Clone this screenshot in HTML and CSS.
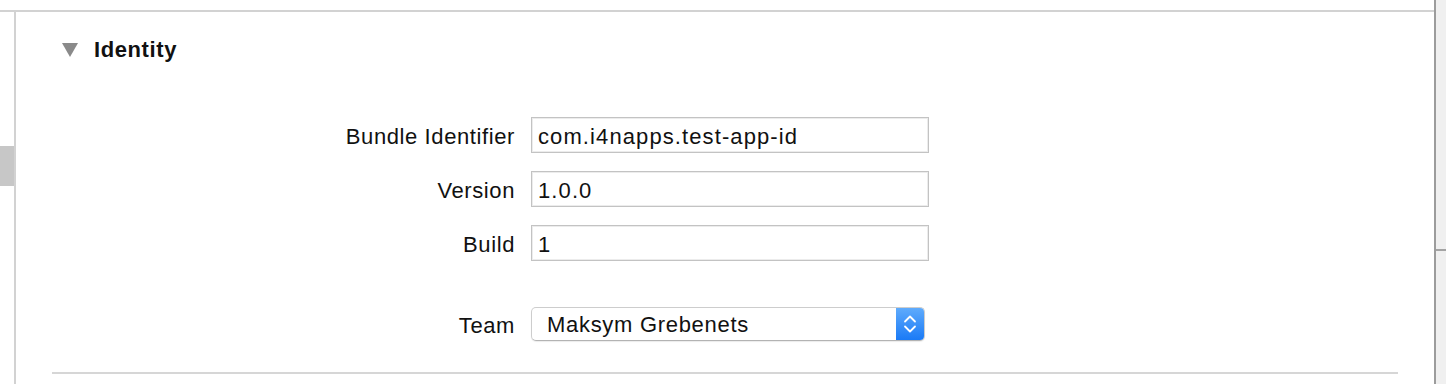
FILE: index.html
```html
<!DOCTYPE html>
<html lang="en">
<head>
  <meta charset="UTF-8">
  <title>Identity</title>
  <link rel="stylesheet" href="styles.css">
</head>
<body>

  <div class="editor">
    <div class="top-gap"></div>
    <div class="pane">
      <div class="gutter">
        <div class="gutter-mark"></div>
      </div>
      <div class="content">

        <div class="section-head">
          <span class="disclosure"></span>
          <h2>Identity</h2>
        </div>

        <div class="form-grid">
          <label>Bundle Identifier</label>
          <div class="field">com.i4napps.test-app-id</div>

          <label>Version</label>
          <div class="field">1.0.0</div>

          <label>Build</label>
          <div class="field">1</div>

          <label class="team-label">Team</label>
          <div class="popup team-popup">
            <span class="popup-value">Maksym Grebenets</span>
            <span class="popup-arrows">
              <svg width="14" height="22" viewBox="0 0 14 22">
                <path d="M2 8.5 L7 3.5 L12 8.5" fill="none" stroke="#fff" stroke-width="1.8" stroke-linecap="round" stroke-linejoin="round"/>
                <path d="M2 13.5 L7 18.5 L12 13.5" fill="none" stroke="#fff" stroke-width="1.8" stroke-linecap="round" stroke-linejoin="round"/>
              </svg>
            </span>
          </div>
        </div>

        <div class="separator"></div>
      </div>
    </div>
  </div>

  <div class="scroll-side">
    <div class="scroll-tick"></div>
  </div>

</body>
</html>
```

FILE: styles.css
```css
body {
  margin: 0;
  height: 384px;
  display: flex;
  background: #fff;
  font-family: 'Liberation Sans', Arial, sans-serif;
  color: #111;
  overflow: hidden;
}

.editor {
  flex: 1;
  display: flex;
  flex-direction: column;
}

.top-gap {
  height: 10px;
  border-bottom: 2px solid #d2d2d2;
}

.pane {
  flex: 1;
  display: flex;
}

.gutter {
  width: 14px;
  padding-top: 134px;
}

.gutter-mark {
  height: 40px;
  background: #c7c7c7;
}

.content {
  flex: 1;
  border-left: 2px solid #d2d2d2;
}

.section-head {
  display: flex;
  align-items: center;
  height: 30px;
  margin-top: 23px;
  padding-left: 46px;
}

.disclosure {
  width: 0;
  height: 0;
  border-left: 8px solid transparent;
  border-right: 8px solid transparent;
  border-top: 14px solid #8a8a8a;
  margin-right: 16px;
}

.section-head h2 {
  margin: 0;
  font-size: 22px;
  font-weight: bold;
  letter-spacing: 0.6px;
}

/* label column ends at 515, fields start at 531 */
.form-grid {
  display: grid;
  grid-template-columns: 499px 398px;
  column-gap: 16px;
  row-gap: 18px;
  align-items: center;
  margin-top: 52px;
}

.form-grid label {
  text-align: right;
  font-size: 22px;
  letter-spacing: 0.6px;
  padding-top: 4px;
}

.field {
  height: 36px;
  box-sizing: border-box;
  border: 1px solid #c3c3c3;
  box-shadow: inset 0 0 0 1px #ececec;
  padding: 2px 6px 0 6px;
  line-height: 34px;
  font-size: 22px;
  letter-spacing: 1.1px;
}

.team-label {
  margin-top: 28px;
}

.popup {
  margin-top: 28px;
  width: 394px;
  height: 34px;
  box-sizing: border-box;
  display: flex;
  border: 1px solid #cdcdcd;
  border-bottom-color: #b3b3b3;
  border-radius: 5px;
  box-shadow: 0 1px 1px rgba(0,0,0,0.08);
  overflow: hidden;
}

.popup-value {
  flex: 1;
  padding: 1px 0 0 15px;
  line-height: 32px;
  font-size: 22px;
  letter-spacing: 0.7px;
}

.popup-arrows {
  width: 28px;
  display: flex;
  align-items: center;
  justify-content: center;
  background: linear-gradient(to bottom, #5fabfc, #1a7af6);
}

.separator {
  height: 2px;
  background: #d6d6d6;
  margin: 31px 36px 0 36px;
}

.scroll-side {
  width: 10px;
  border-left: 2px solid #9c9c9c;
  background: #f0f0f0;
  padding-top: 249px;
}

.scroll-tick {
  height: 2px;
  background: #a3a3a3;
}
```
